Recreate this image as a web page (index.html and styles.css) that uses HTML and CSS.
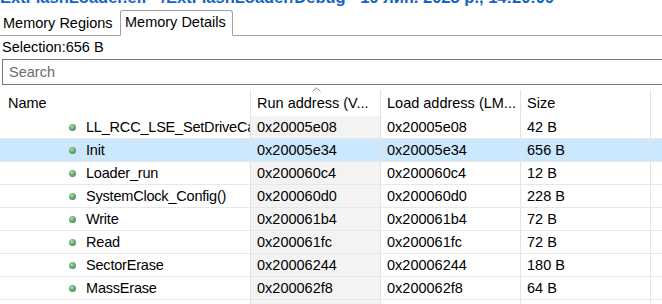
FILE: index.html
```html
<!DOCTYPE html>
<html lang="en">
<head>
    <meta charset="UTF-8">
    <title>Memory Details</title>
    <link rel="stylesheet" href="styles.css">
</head>
<body>
    <div class="title-strip">
        <div class="title-text">ExtFlashLoader.elf - /ExtFlashLoader/Debug - 19 лип. 2023 р., 14:20:09</div>
    </div>

    <div class="tab-bar">
        <div class="tab">Memory Regions</div>
        <div class="tab active">Memory Details</div>
        <div class="tab-fill"></div>
    </div>

    <div class="selection">Selection:656 B</div>

    <div class="search-box">Search</div>

    <div class="grid">
        <div class="head first">Name</div>
        <div class="head sorted">Run address (V...<svg class="sort-arrow" width="9" height="5" viewBox="0 0 9 5"><path d="M0.5 4.5 L4.5 0.8 L8.5 4.5" fill="none" stroke="#8a8a8a" stroke-width="1"/></svg></div>
        <div class="head">Load address (LM...</div>
        <div class="head">Size</div>
        <div class="head last"></div>

        <div class="cell name"><span class="dot"></span><span class="label">LL_RCC_LSE_SetDriveCap</span></div>
        <div class="cell run">0x20005e08</div>
        <div class="cell">0x20005e08</div>
        <div class="cell">42 B</div>
        <div class="cell last"></div>

        <div class="cell name sel"><span class="dot"></span><span class="label">Init</span></div>
        <div class="cell run sel">0x20005e34</div>
        <div class="cell sel">0x20005e34</div>
        <div class="cell sel">656 B</div>
        <div class="cell last sel"></div>

        <div class="cell name"><span class="dot"></span><span class="label">Loader_run</span></div>
        <div class="cell run">0x200060c4</div>
        <div class="cell">0x200060c4</div>
        <div class="cell">12 B</div>
        <div class="cell last"></div>

        <div class="cell name"><span class="dot"></span><span class="label">SystemClock_Config()</span></div>
        <div class="cell run">0x200060d0</div>
        <div class="cell">0x200060d0</div>
        <div class="cell">228 B</div>
        <div class="cell last"></div>

        <div class="cell name"><span class="dot"></span><span class="label">Write</span></div>
        <div class="cell run">0x200061b4</div>
        <div class="cell">0x200061b4</div>
        <div class="cell">72 B</div>
        <div class="cell last"></div>

        <div class="cell name"><span class="dot"></span><span class="label">Read</span></div>
        <div class="cell run">0x200061fc</div>
        <div class="cell">0x200061fc</div>
        <div class="cell">72 B</div>
        <div class="cell last"></div>

        <div class="cell name"><span class="dot"></span><span class="label">SectorErase</span></div>
        <div class="cell run">0x20006244</div>
        <div class="cell">0x20006244</div>
        <div class="cell">180 B</div>
        <div class="cell last"></div>

        <div class="cell name"><span class="dot"></span><span class="label">MassErase</span></div>
        <div class="cell run">0x200062f8</div>
        <div class="cell">0x200062f8</div>
        <div class="cell">64 B</div>
        <div class="cell last"></div>

        <div class="cell name short"></div>
        <div class="cell run short"></div>
        <div class="cell short"></div>
        <div class="cell short"></div>
        <div class="cell last short"></div>
    </div>
</body>
</html>
```

FILE: styles.css
```css
body {
    font-family: 'Liberation Sans', Arial, sans-serif;
    font-size: 14.5px;
    margin: 0;
    background-color: #ffffff;
    color: #000000;
    overflow: hidden;
    height: 304px;
}

.title-strip {
    height: 6px;
    overflow: hidden;
}

.title-text {
    margin-top: -12px;
    line-height: 18px;
    font-size: 16.5px;
    font-weight: bold;
    color: #1565c0;
    white-space: nowrap;
}

.tab-bar {
    display: flex;
    height: 30px;
    align-items: flex-end;
}

.tab {
    height: 23px;
    line-height: 22px;
    padding: 0 4px 0 3px;
    border-bottom: 1px solid #a0a0a0;
    white-space: nowrap;
    width: 113px;
    flex: none;
}

.tab.active {
    height: 24px;
    width: 103px;
    padding: 0 4px;
    border: 1px solid #a0a0a0;
    border-bottom: 1px solid transparent;
    border-radius: 3px 3px 0 0;
}

.tab-fill {
    flex: 1;
    height: 0;
    border-bottom: 1px solid #a0a0a0;
}

.selection {
    height: 23px;
    line-height: 23px;
    padding-left: 2px;
}

.search-box {
    height: 24px;
    line-height: 24px;
    margin-left: 2px;
    margin-right: -6px;
    padding-left: 6px;
    border: 1px solid #7a7a7a;
    color: #6d6d6d;
}

.grid {
    display: grid;
    grid-template-columns: 251px 130px 140px 130px 1fr;
}

.head {
    position: relative;
    height: 26px;
    margin-top: 5px;
    line-height: 26px;
    padding-left: 6px;
    border-right: 1px solid #e3e3e3;
    white-space: nowrap;
}

.head.first {
    padding-left: 8px;
}

.head.last {
    border-right: none;
}

.sort-arrow {
    position: absolute;
    left: 61px;
    top: -3px;
}

.cell {
    height: 22px;
    line-height: 22px;
    padding-left: 6px;
    border-right: 1px solid #e3e3e3;
    border-bottom: 1px solid #e8e8e8;
    white-space: nowrap;
    overflow: hidden;
}

.cell.short {
    height: 4px;
    border-bottom: none;
}

.cell.last {
    border-right: none;
}

.cell.run {
    background-color: #f3f3f3;
}

.cell.name {
    display: flex;
    align-items: center;
    padding-left: 69px;
}

.label {
    overflow: hidden;
    letter-spacing: -0.2px;
}

.cell.sel {
    background-color: #cce8ff;
}

.dot {
    width: 7px;
    height: 7px;
    margin-right: 10px;
    border-radius: 50%;
    flex: none;
    background: radial-gradient(circle at 40% 35%, #b3dfba 0%, #64a873 45%, #3f8150 100%);
}
```
